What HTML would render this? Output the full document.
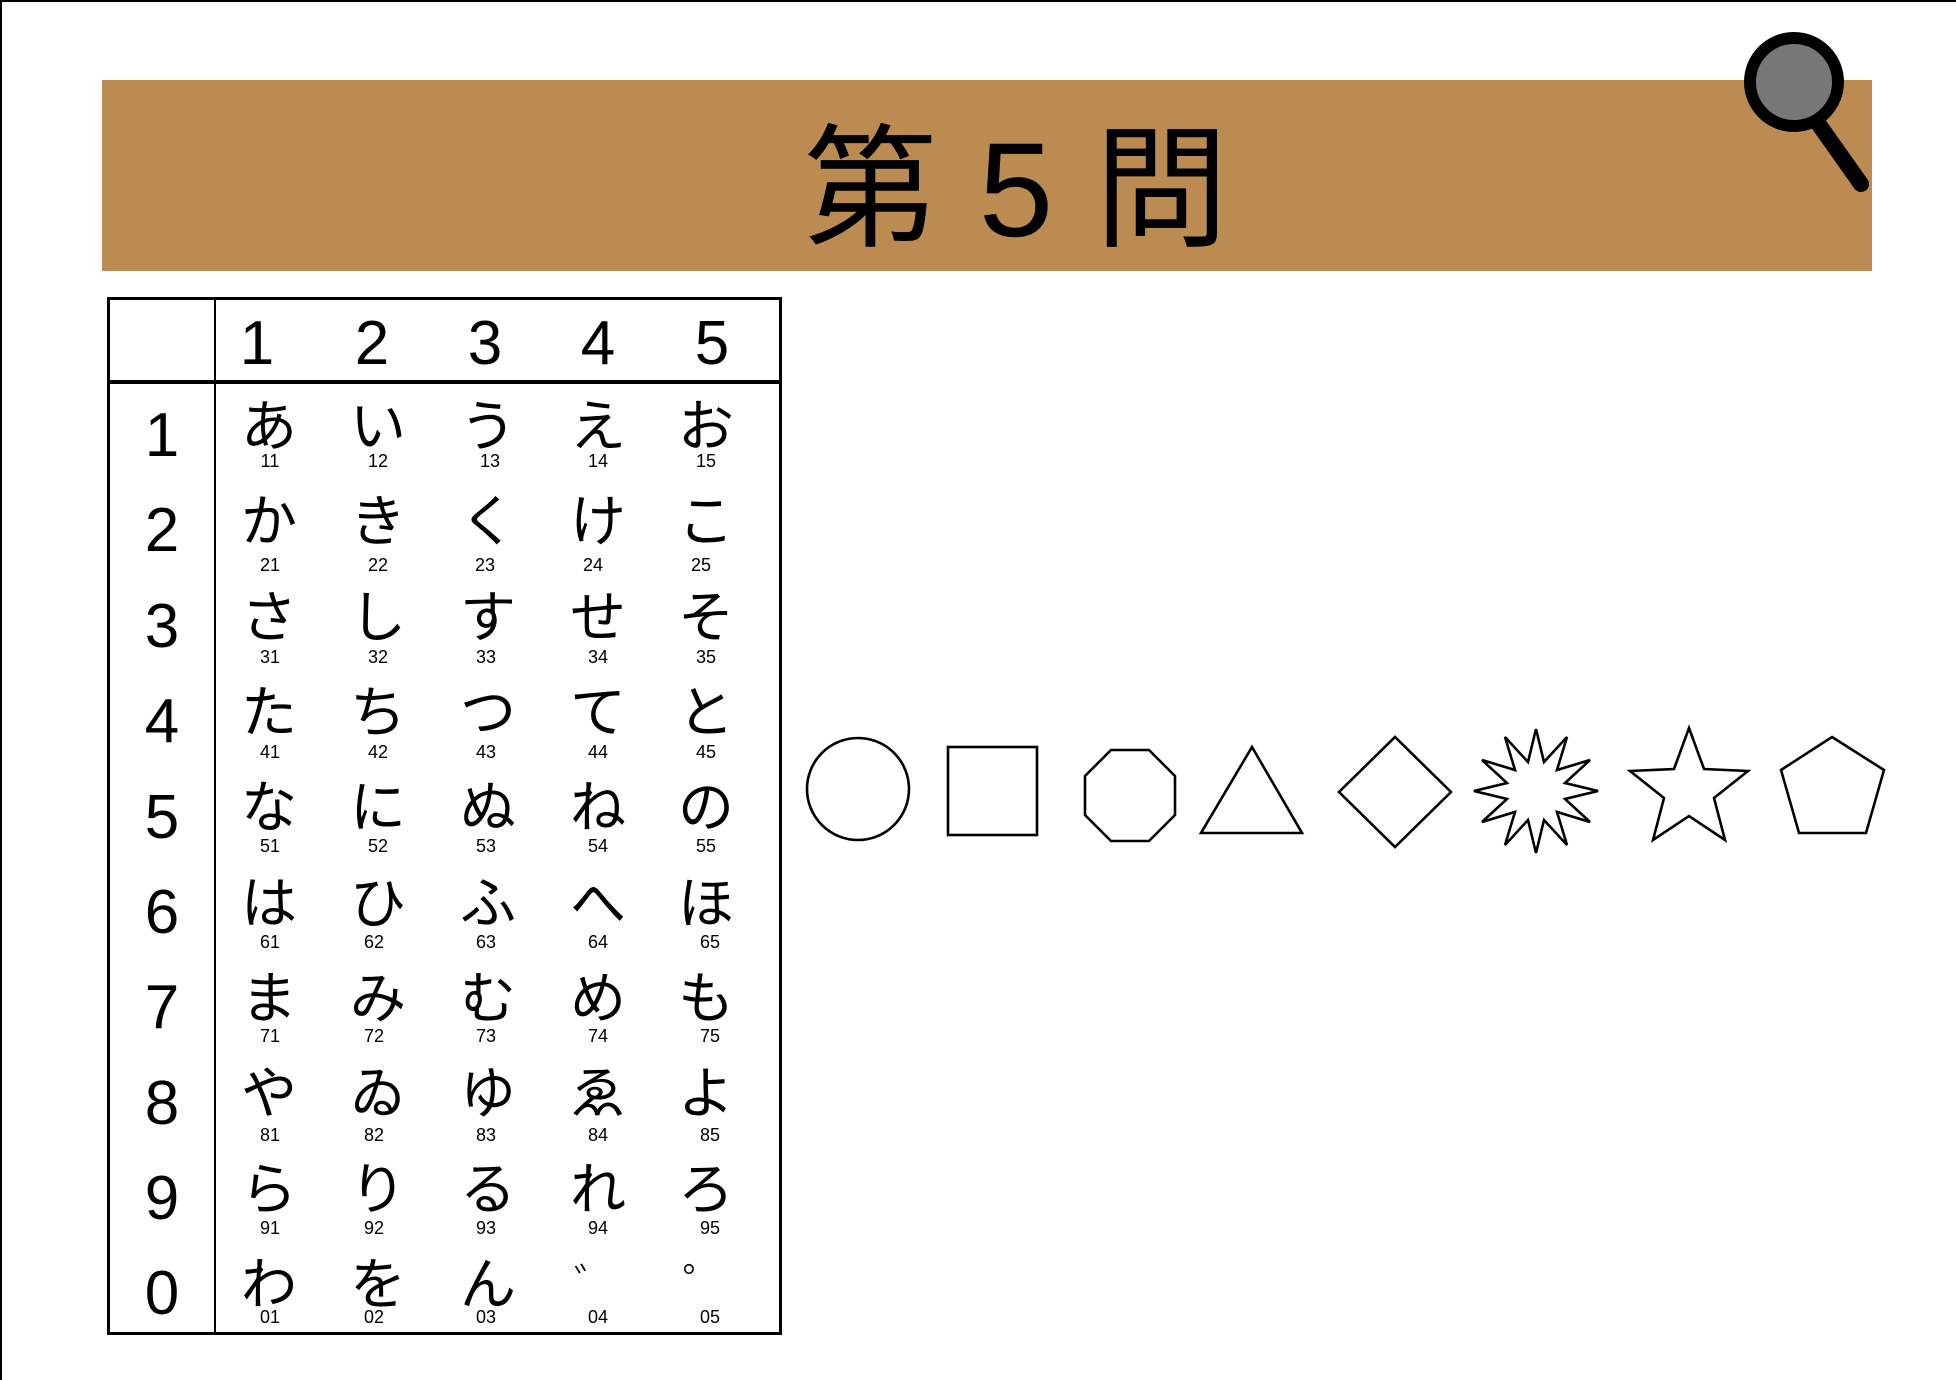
<!DOCTYPE html>
<html><head><meta charset="utf-8"><style>
html,body{margin:0;padding:0;background:#fff;width:1956px;height:1380px;overflow:hidden}
svg{display:block}
</style></head><body>
<svg width="1956" height="1380" viewBox="0 0 1956 1380" xmlns="http://www.w3.org/2000/svg">
<rect x="0" y="0" width="1956" height="1380" fill="#fff"/>
<line x1="0" y1="1" x2="1956" y2="1" stroke="#000" stroke-width="2"/>
<line x1="1" y1="0" x2="1" y2="1380" stroke="#000" stroke-width="2"/>
<rect x="102" y="80" width="1770" height="191" fill="#BC8B52"/>
<text x="1017" y="236" text-anchor="middle" font-family="'Liberation Sans','Noto Sans CJK JP',sans-serif" font-size="134" fill="#000" letter-spacing="2">第 5 問</text>
<line x1="1810" y1="112" x2="1861" y2="184" stroke="#000" stroke-width="16" stroke-linecap="round"/>
<circle cx="1794" cy="82" r="44" fill="#777" stroke="#000" stroke-width="12"/>
<g stroke="#000" fill="none">
<rect x="108.5" y="298.5" width="672" height="1035" stroke-width="3"/>
<line x1="108" y1="382" x2="781" y2="382" stroke-width="4"/>
<line x1="215" y1="298" x2="215" y2="1334" stroke-width="2"/>
</g>
<g font-family="'Liberation Sans',sans-serif" font-size="62" text-anchor="middle" fill="#000">
<text x="257" y="364">1</text><text x="372" y="364">2</text><text x="485" y="364">3</text><text x="598" y="364">4</text><text x="712" y="364">5</text>
<text x="162" y="456">1</text><text x="162" y="551">2</text><text x="162" y="647">3</text><text x="162" y="742">4</text><text x="162" y="838">5</text><text x="162" y="933">6</text><text x="162" y="1028">7</text><text x="162" y="1124">8</text><text x="162" y="1219">9</text><text x="162" y="1314">0</text>
</g>
<g font-family="'Noto Sans CJK JP',sans-serif" font-size="56" text-anchor="middle" fill="#000">
<text y="446"><tspan x="269">あ</tspan><tspan x="378">い</tspan><tspan x="488">う</tspan><tspan x="598">え</tspan><tspan x="706">お</tspan></text>
<text y="541"><tspan x="269">か</tspan><tspan x="378">き</tspan><tspan x="488">く</tspan><tspan x="598">け</tspan><tspan x="706">こ</tspan></text>
<text y="637"><tspan x="269">さ</tspan><tspan x="378">し</tspan><tspan x="488">す</tspan><tspan x="598">せ</tspan><tspan x="706">そ</tspan></text>
<text y="732"><tspan x="269">た</tspan><tspan x="378">ち</tspan><tspan x="488">つ</tspan><tspan x="598">て</tspan><tspan x="706">と</tspan></text>
<text y="827"><tspan x="269">な</tspan><tspan x="378">に</tspan><tspan x="488">ぬ</tspan><tspan x="598">ね</tspan><tspan x="706">の</tspan></text>
<text y="923"><tspan x="269">は</tspan><tspan x="378">ひ</tspan><tspan x="488">ふ</tspan><tspan x="598">へ</tspan><tspan x="706">ほ</tspan></text>
<text y="1018"><tspan x="269">ま</tspan><tspan x="378">み</tspan><tspan x="488">む</tspan><tspan x="598">め</tspan><tspan x="706">も</tspan></text>
<text y="1113"><tspan x="269">や</tspan><tspan x="378">ゐ</tspan><tspan x="488">ゆ</tspan><tspan x="598">ゑ</tspan><tspan x="706">よ</tspan></text>
<text y="1209"><tspan x="269">ら</tspan><tspan x="378">り</tspan><tspan x="488">る</tspan><tspan x="598">れ</tspan><tspan x="706">ろ</tspan></text>
<text y="1304"><tspan x="269">わ</tspan><tspan x="378">を</tspan><tspan x="488">ん</tspan></text>
</g>
<g font-family="'Noto Sans CJK JP',sans-serif" font-size="44" font-weight="300" text-anchor="middle" fill="#000">
<text y="1300"><tspan x="596">゛</tspan><tspan x="705">゜</tspan></text>
</g>
<g font-family="'Liberation Sans',sans-serif" font-size="18" text-anchor="middle" fill="#000">
<text y="467"><tspan x="270">11</tspan><tspan x="378">12</tspan><tspan x="490">13</tspan><tspan x="598">14</tspan><tspan x="706">15</tspan></text>
<text y="571"><tspan x="270">21</tspan><tspan x="378">22</tspan><tspan x="485">23</tspan><tspan x="593">24</tspan><tspan x="701">25</tspan></text>
<text y="663"><tspan x="270">31</tspan><tspan x="378">32</tspan><tspan x="486">33</tspan><tspan x="598">34</tspan><tspan x="706">35</tspan></text>
<text y="758"><tspan x="270">41</tspan><tspan x="378">42</tspan><tspan x="486">43</tspan><tspan x="598">44</tspan><tspan x="706">45</tspan></text>
<text y="852"><tspan x="270">51</tspan><tspan x="378">52</tspan><tspan x="486">53</tspan><tspan x="598">54</tspan><tspan x="706">55</tspan></text>
<text y="948"><tspan x="270">61</tspan><tspan x="374">62</tspan><tspan x="486">63</tspan><tspan x="598">64</tspan><tspan x="710">65</tspan></text>
<text y="1042"><tspan x="270">71</tspan><tspan x="374">72</tspan><tspan x="486">73</tspan><tspan x="598">74</tspan><tspan x="710">75</tspan></text>
<text y="1141"><tspan x="270">81</tspan><tspan x="374">82</tspan><tspan x="486">83</tspan><tspan x="598">84</tspan><tspan x="710">85</tspan></text>
<text y="1234"><tspan x="270">91</tspan><tspan x="374">92</tspan><tspan x="486">93</tspan><tspan x="598">94</tspan><tspan x="710">95</tspan></text>
<text y="1323"><tspan x="270">01</tspan><tspan x="374">02</tspan><tspan x="486">03</tspan><tspan x="598">04</tspan><tspan x="710">05</tspan></text>
</g>
<g stroke="#000" stroke-width="2.6" fill="none" stroke-linejoin="miter">
<circle cx="858" cy="789" r="51"/>
<rect x="948" y="747" width="89" height="88"/>
<polygon points="1111,750 1149,750 1175,776 1175,815 1149,841 1111,841 1085,815 1085,776"/>
<polygon points="1252,747 1302,833 1201,833"/>
<polygon points="1395,737 1451,792 1395,847 1339,792"/>
<polygon points="1536,729 1544,762 1567,737 1557,770 1590,760 1565,783 1598,791 1565,799 1590,822 1557,812 1567,845 1544,820 1536,853 1528,820 1505,845 1515,812 1482,822 1507,799 1474,791 1507,783 1482,760 1515,770 1505,737 1528,762"/>
<polygon points="1689,728 1704,769 1748,771 1714,798 1725,840 1689,816 1653,840 1664,798 1630,771 1674,769"/>
<polygon points="1832,737 1884,770 1866,833 1799,833 1781,770"/>
</g>
</svg>
</body></html>
